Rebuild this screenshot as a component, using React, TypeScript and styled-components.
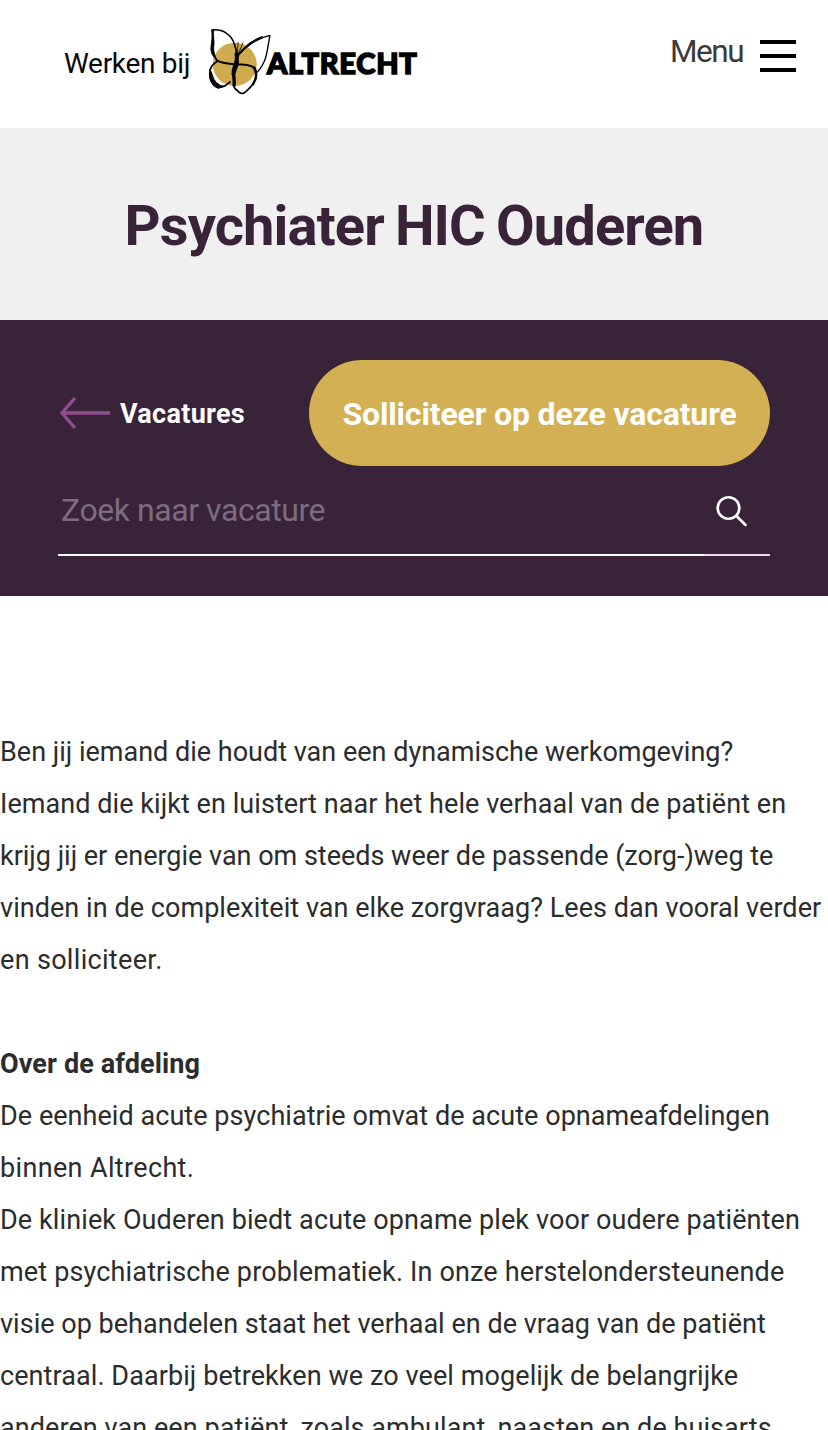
import React from 'react';
import styled, { createGlobalStyle } from 'styled-components';

const GlobalStyle = createGlobalStyle`
  *, *::before, *::after { box-sizing: border-box; }
  html { overflow: hidden; }
  body { margin: 0; background: #fff; color: #2b2c2c; font-family: Roboto, sans-serif; }
`;

const Page = styled.div`
  width: 100%;
  height: 1430px;
  overflow: hidden;
`;

const Header = styled.header`
  display: flex;
  justify-content: space-between;
  height: 128px;
  padding: 27px 32px 0 64px;
`;

const Brand = styled.a`
  display: flex;
  align-items: flex-start;
  color: #0b0a0b;
`;

const BrandPrefix = styled.span`
  width: 143px;
  padding-top: 19px;
  font-size: 28px;
  line-height: 36px;
  letter-spacing: -0.3px;
  white-space: nowrap;
`;

const Butterfly = styled.svg`
  flex: none;
  width: 67px;
  height: 70px;
`;

const Wordmark = styled.span`
  margin-left: -7px;
  padding-top: 18px;
  font-family: Lato, sans-serif;
  font-weight: 900;
  font-size: 29px;
  line-height: 36px;
  letter-spacing: 0.75px;
  color: #000;
  -webkit-text-stroke: 1.5px #000;
`;

const MenuButton = styled.button`
  display: flex;
  align-items: flex-start;
  gap: 17px;
  height: 60px;
  padding: 0;
  border: 0;
  background: none;
  color: #3a3a3a;
  font-family: inherit;
  font-size: 31.5px;
  font-weight: 400;
  line-height: 50px;
  letter-spacing: -1.5px;
`;

const Bars = styled.span`
  display: flex;
  flex-direction: column;
  gap: 10px;
  width: 36px;
  padding-top: 13px;
`;

const Bar = styled.span`
  height: 4px;
  background: #000;
`;

const TitleBand = styled.section`
  height: 192px;
  padding-top: 67px;
  background: #f0f0f0;
`;

const Title = styled.h1`
  margin: 0;
  color: #382338;
  font-size: 56px;
  font-weight: 700;
  line-height: 62px;
  letter-spacing: -0.85px;
  word-spacing: -2px;
  text-align: center;
`;

const ActionBand = styled.section`
  height: 276px;
  padding: 40px 58px 0;
  background: #382338;
`;

const ActionRow = styled.div`
  display: flex;
  align-items: center;
  justify-content: space-between;
  height: 106px;
`;

const BackLink = styled.a`
  display: flex;
  align-items: center;
  gap: 9px;
  color: #fff;
  font-size: 27px;
  font-weight: 700;
  line-height: 36px;
  letter-spacing: 0.3px;
`;

const BackLabel = styled.span`
  padding-top: 2px;
`;

const ArrowIcon = styled.svg`
  width: 53px;
  height: 34px;
`;

const ApplyButton = styled.button`
  width: 461px;
  height: 106px;
  padding: 2px 0 0;
  border: 0;
  border-radius: 53px;
  background: #d3b053;
  color: #fff;
  font-family: inherit;
  font-size: 32px;
  font-weight: 700;
  letter-spacing: -0.15px;
  white-space: nowrap;
`;

const SearchForm = styled.form`
  display: flex;
  height: 90px;
`;

const SearchInput = styled.input`
  width: 646px;
  padding: 0 0 0 3px;
  border: 0;
  border-bottom: 2px solid #fff;
  outline: 0;
  background: none;
  color: #fff;
  font-family: inherit;
  font-size: 32px;
  font-weight: 400;
  letter-spacing: -0.44px;
  &::placeholder { color: #7d6b80; opacity: 1; }
`;

const SearchButton = styled.button`
  flex: 1;
  padding: 2px 0 0 11px;
  border: 0;
  border-bottom: 2px solid #eadbe8;
  background: none;
  text-align: left;
`;

const SearchIcon = styled.svg`
  display: block;
  width: 34px;
  height: 34px;
`;

const Article = styled.main`
  padding-top: 130px;
  font-size: 27px;
  line-height: 52px;
`;

const Paragraph = styled.p`
  margin: 0 0 52px;
`;

const Subheading = styled.h2`
  margin: 0;
  font-size: 27px;
  font-weight: 700;
  line-height: 52px;
  letter-spacing: 0.12px;
`;

const Line = styled.span<{ $track: number }>`
  display: block;
  white-space: nowrap;
  letter-spacing: ${(p) => p.$track}px;
`;

type TextLine = [text: string, track: number];

const intro: TextLine[] = [
  ['Ben jij iemand die houdt van een dynamische werkomgeving?', 0],
  ['Iemand die kijkt en luistert naar het hele verhaal van de patiënt en', 0.06],
  ['krijg jij er energie van om steeds weer de passende (zorg-)weg te', -0.01],
  ['vinden in de complexiteit van elke zorgvraag? Lees dan vooral verder', 0.05],
  ['en solliciteer.', 0.32],
];

const department: TextLine[] = [
  ['De eenheid acute psychiatrie omvat de acute opnameafdelingen', 0.05],
  ['binnen Altrecht.', 0.35],
  ['De kliniek Ouderen biedt acute opname plek voor oudere patiënten', 0.11],
  ['met psychiatrische problematiek. In onze herstelondersteunende', 0.15],
  ['visie op behandelen staat het verhaal en de vraag van de patiënt', 0.02],
  ['centraal. Daarbij betrekken we zo veel mogelijk de belangrijke', 0.08],
  ['anderen van een patiënt, zoals ambulant, naasten en de huisarts', 0.07],
];

const Lines = ({ lines }: { lines: TextLine[] }) => (
  <Paragraph>
    {lines.map(([text, track]) => (
      <Line key={text} $track={track}>{text} </Line>
    ))}
  </Paragraph>
);

export default function App() {
  return (
    <Page>
      <GlobalStyle />
      <Header>
        <Brand>
          <BrandPrefix>Werken bij</BrandPrefix>
          <Butterfly viewBox="9 6 198 210" preserveAspectRatio="none" fill="none" stroke="#000" strokeLinecap="round" strokeLinejoin="round">
            <circle cx="91" cy="118" r="65" fill="#d0ab4e" stroke="none" />
            <path d="M38 106C26 88 23 78 25 55C26 39 25 27 24 15C55 12 82 27 91 61C95 75 96 83 98 94" strokeWidth="4.5" />
            <path d="M24 15L29 14C27 35 32 51 29 67C28 81 33 93 39 106C24 94 18 79 21 62C24 47 25 30 24 15Z" fill="#000" strokeWidth="2" />
            <path d="M98 94C117 71 154 39 195 31C190 54 187 91 179 107C172 123 163 137 154 144" strokeWidth="4" />
            <path d="M98 94C117 69 145 45 172 37" strokeWidth="6" />
            <path d="M38 106C55 116 75 117 94 118C118 118 139 120 150 129" strokeWidth="6" />
            <path d="M38 110C20 119 14 139 19 163C26 184 43 190 60 184L77 171" strokeWidth="5" />
            <path d="M18 133C13 154 22 185 43 190L60 184C43 184 27 167 25 151Z" fill="#000" strokeWidth="3" />
            <path d="M150 128C164 151 149 181 117 205C110 207 103 203 98 196C90 192 89 187 88 178" strokeWidth="5" />
            <path d="M147 127C159 147 154 164 145 178" strokeWidth="7" />
            <path d="M98 94C96 111 90 123 87 137C87 152 91 168 89 181" strokeWidth="10" />
            <path d="M96 87L98 115L87 147" strokeWidth="11" />
            <path d="M91 56L98 87M101 52L99 86M115 54L101 88" strokeWidth="2.5" />
          </Butterfly>
          <Wordmark>ALTRECHT</Wordmark>
        </Brand>
        <MenuButton>
          Menu
          <Bars><Bar /><Bar /><Bar /></Bars>
        </MenuButton>
      </Header>
      <TitleBand>
        <Title>Psychiater HIC Ouderen</Title>
      </TitleBand>
      <ActionBand>
        <ActionRow>
          <BackLink>
            <ArrowIcon viewBox="0 0 53 34" fill="none" stroke="#904d91" strokeWidth="3.4">
              <path d="M52 17H4M17 2L4 17L17 32" />
            </ArrowIcon>
            <BackLabel>Vacatures</BackLabel>
          </BackLink>
          <ApplyButton>Solliciteer op deze vacature</ApplyButton>
        </ActionRow>
        <SearchForm>
          <SearchInput placeholder="Zoek naar vacature" />
          <SearchButton type="button" aria-label="Zoek">
            <SearchIcon viewBox="0 0 34 34" fill="none" stroke="#fff" strokeWidth="2.6" strokeLinecap="round">
              <circle cx="13.5" cy="14" r="10.8" />
              <path d="M21.5 22L30.5 31" />
            </SearchIcon>
          </SearchButton>
        </SearchForm>
      </ActionBand>
      <Article>
        <Lines lines={intro} />
        <Subheading>Over de afdeling</Subheading>
        <Lines lines={department} />
      </Article>
    </Page>
  );
}
